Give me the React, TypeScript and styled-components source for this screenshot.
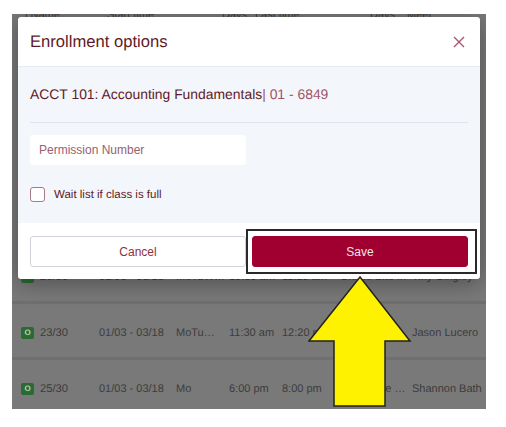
import React from 'react';
import styled, { createGlobalStyle } from 'styled-components';

const GlobalStyle = createGlobalStyle`
  html, body {
    margin: 0;
    padding: 0;
    background: #fff;
  }
  body {
    font-family: 'Liberation Sans', Arial, sans-serif;
    text-rendering: geometricPrecision;
  }
`;

const Page = styled.div`
  width: 506px;
  height: 427px;
  padding: 14px 20px 18px 12px;
  box-sizing: border-box;
  overflow: hidden;
`;

const Backdrop = styled.div`
  position: relative;
  width: 474px;
  height: 395px;
  background: #797979;
  overflow: hidden;
`;

const TableHead = styled.div`
  display: grid;
  grid-template-columns: 82px 115px 33px 115px 37px 1fr;
  height: 239px;
  padding-left: 13px;
  margin-top: -5px;
  box-sizing: border-box;
  font-size: 11px;
  color: #3c3c3c;
  white-space: nowrap;
`;

const Row = styled.div`
  display: grid;
  grid-template-columns: 78px 77px 53px 53px 58px 72px 1fr;
  align-items: center;
  height: 56px;
  box-sizing: border-box;
  padding: 4px 0 0 9px;
  border-bottom: 3px solid #6f6f73;
  font-size: 11px;
  color: #3c3c3c;
  white-space: nowrap;
`;

const Seats = styled.span`
  display: flex;
  align-items: center;
  gap: 6px;
  font-size: 11.2px;
`;

const OpenBadge = styled.span`
  display: inline-flex;
  align-items: center;
  justify-content: center;
  width: 13px;
  height: 12px;
  border-radius: 2px;
  background: #2b6a33;
  color: #b9d8bc;
  font-size: 8px;
  font-weight: 700;
`;

const Modal = styled.div`
  position: absolute;
  left: 6px;
  top: 3px;
  width: 462px;
  height: 262px;
  display: flex;
  flex-direction: column;
  background: #fff;
  border-radius: 3px;
  box-shadow: 0 4px 22px rgba(0, 0, 0, 0.35);
  overflow: hidden;
`;

const Header = styled.div`
  display: flex;
  align-items: center;
  justify-content: space-between;
  height: 50px;
  padding: 1px 15px 0 12px;
  border-bottom: 1px solid #e8ecf2;
  box-sizing: border-box;
`;

const Title = styled.h2`
  margin: 0;
  font-size: 16.6px;
  font-weight: 400;
  color: #5f1a26;
`;

const CloseIcon = styled.svg`
  width: 12px;
  height: 12px;
  stroke: #a8546a;
  stroke-width: 1.4;
  fill: none;
`;

const Body = styled.div`
  flex: 1;
  display: flex;
  flex-direction: column;
  align-items: flex-start;
  padding: 0 12px;
  background: #f3f6fa;
`;

const CourseLine = styled.div`
  align-self: stretch;
  height: 56px;
  padding-top: 19px;
  box-sizing: border-box;
  border-bottom: 1px solid #dfe3ea;
  font-size: 13.9px;
  color: #5f1a26;
`;

const Section = styled.span`
  color: #a05468;
`;

const PermissionInput = styled.input`
  width: 216px;
  height: 30px;
  margin-top: 12px;
  padding: 0 9px;
  box-sizing: border-box;
  border: 0;
  border-radius: 3px;
  background: #fff;
  font: 12px 'Liberation Sans', Arial, sans-serif;

  &::placeholder {
    color: #9a6072;
    opacity: 1;
  }
`;

const WaitList = styled.label`
  display: flex;
  align-items: center;
  gap: 9px;
  margin-top: 22px;
  font-size: 11.5px;
  color: #5f1a26;
`;

const Box = styled.span`
  width: 13px;
  height: 13px;
  border: 1.5px solid #a87a88;
  border-radius: 3px;
  background: #fff;
`;

const Footer = styled.div`
  display: grid;
  grid-template-columns: 216px 216px;
  gap: 6px;
  height: 56px;
  padding: 13px 12px 0;
  box-sizing: border-box;
`;

const ActionButton = styled.button<{ $primary?: boolean }>`
  height: 31px;
  border-radius: 3px;
  border: 1px solid ${(p) => (p.$primary ? '#a00030' : '#cfd2d8')};
  background: ${(p) => (p.$primary ? '#a00030' : '#fff')};
  color: ${(p) => (p.$primary ? '#f7e3e8' : '#8c2f42')};
  font: 12px 'Liberation Sans', Arial, sans-serif;
`;

const SaveHighlight = styled.div`
  position: absolute;
  left: 234px;
  top: 215px;
  width: 231px;
  height: 45px;
  border: 2px solid #2a2a2a;
  box-sizing: border-box;
  pointer-events: none;
`;

const Arrow = styled.svg`
  position: absolute;
  left: 296px;
  top: 262px;
  width: 104px;
  height: 133px;
`;

const heads = ['l Name', 'Start time', 'Days', 'Last time', 'Days', 'Meet'];

const rows = [
  { seats: '20/30', days: 'MoTuW…', start: '10:30 am', end: '11:20 am', type: 'Online Site In', teacher: 'Tiny Gingley' },
  { seats: '23/30', days: 'MoTu…', start: '11:30 am', end: '12:20 pm', type: 'Online live …', teacher: 'Jason Lucero' },
  { seats: '25/30', days: 'Mo', start: '6:00 pm', end: '8:00 pm', type: 'Online live …', teacher: 'Shannon Bath' },
];

export default function App(): React.ReactElement {
  return (
    <Page>
      <GlobalStyle />
      <Backdrop>
        <TableHead>
          {heads.map((head, i) => (
            <span key={i}>{head}</span>
          ))}
        </TableHead>
        {rows.map((row) => (
          <Row key={row.seats}>
            <Seats>
              <OpenBadge>O</OpenBadge>
              {row.seats}
            </Seats>
            <span>01/03 - 03/18</span>
            <span>{row.days}</span>
            <span>{row.start}</span>
            <span>{row.end}</span>
            <span>{row.type}</span>
            <span>{row.teacher}</span>
          </Row>
        ))}
        <Modal>
          <Header>
            <Title>Enrollment options</Title>
            <CloseIcon viewBox="0 0 12 12">
              <path d="M1 1l10 10M11 1L1 11" />
            </CloseIcon>
          </Header>
          <Body>
            <CourseLine>
              ACCT 101: Accounting Fundamentals<Section>| 01 - 6849</Section>
            </CourseLine>
            <PermissionInput placeholder="Permission Number" readOnly />
            <WaitList>
              <Box />
              Wait list if class is full
            </WaitList>
          </Body>
          <Footer>
            <ActionButton>Cancel</ActionButton>
            <ActionButton $primary>Save</ActionButton>
          </Footer>
        </Modal>
        <SaveHighlight />
        <Arrow viewBox="0 0 104 133">
          <path
            d="M52 1L102 65H77V130H26V65H1Z"
            fill="#fff200"
            stroke="#222"
            strokeWidth="1.5"
          />
        </Arrow>
      </Backdrop>
    </Page>
  );
}
